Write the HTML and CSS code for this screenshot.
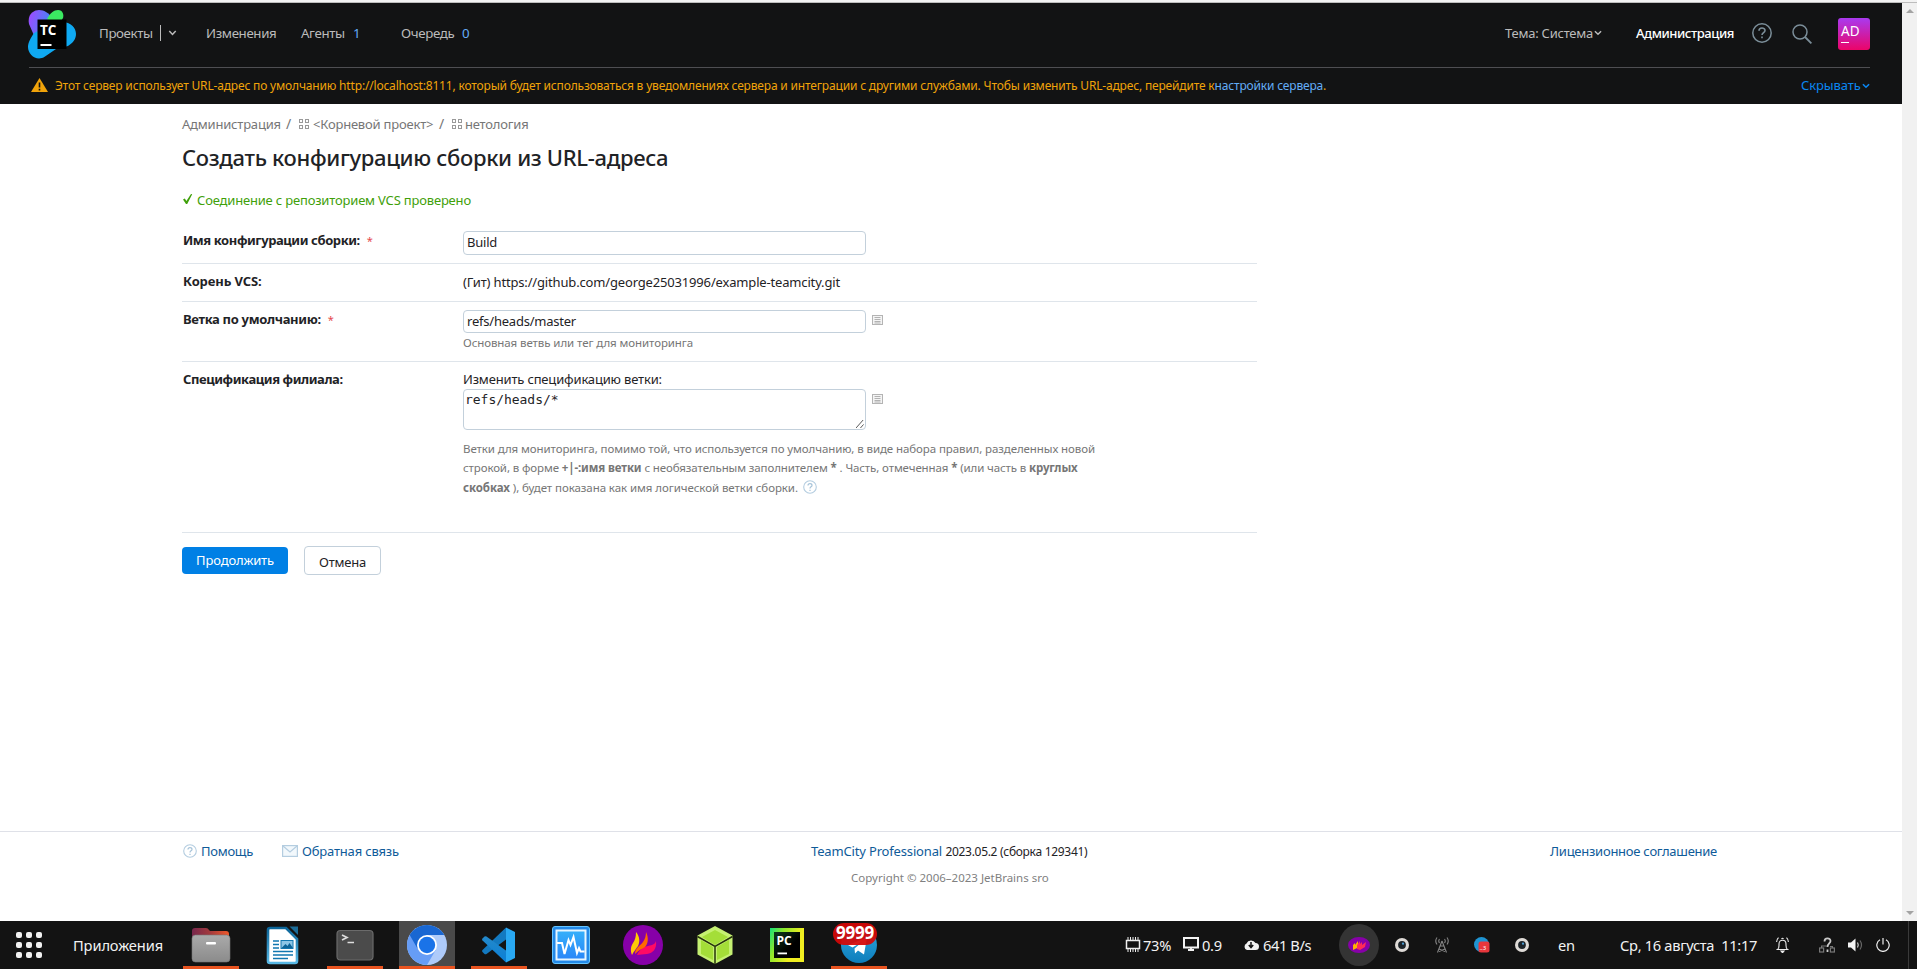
FILE: index.html
```
<!DOCTYPE html>
<html lang="ru">
<head>
<meta charset="utf-8">
<title>Создать конфигурацию сборки — TeamCity</title>
<link rel="stylesheet" href="styles.css">
</head>
<body>
<svg width="0" height="0" class="defs">
  <defs>
    <linearGradient id="tcA" x1="0" y1="0.3" x2="1" y2="0.6"><stop offset="0" stop-color="#9a4dff"/><stop offset="1" stop-color="#1aa0f0"/></linearGradient>
    <linearGradient id="fold" x1="0" x2="1"><stop offset="0" stop-color="#77274c"/><stop offset=".5" stop-color="#a43a3c"/><stop offset="1" stop-color="#f0592a"/></linearGradient>
    <linearGradient id="foldF" x1="0" y1="0" x2="0" y2="1"><stop offset="0" stop-color="#aaa"/><stop offset="1" stop-color="#8b8b8b"/></linearGradient>
    <linearGradient id="docG" x1="0" y1="0" x2="0" y2="1"><stop offset="0" stop-color="#0b6599"/><stop offset="1" stop-color="#59b9e6"/></linearGradient>
    <linearGradient id="vsc" x1="0" y1="0" x2="0" y2="1"><stop offset="0" stop-color="#2489ca"/><stop offset="1" stop-color="#0a7fd6"/></linearGradient>
    <linearGradient id="mon" x1="0" y1="0" x2="0" y2="1"><stop offset="0" stop-color="#35b0fa"/><stop offset="1" stop-color="#2a86f8"/></linearGradient>
    <linearGradient id="pcG" x1="0" y1="0" x2="1" y2=".5"><stop offset="0" stop-color="#14e07a"/><stop offset=".35" stop-color="#8fe82c"/><stop offset=".8" stop-color="#f0ee20"/></linearGradient>
    <linearGradient id="pcK" x1="0" y1="0" x2="1" y2="1"><stop offset="0" stop-color="#0c3a1c"/><stop offset=".6" stop-color="#000"/></linearGradient>
    <linearGradient id="tgG" x1="0" y1="0" x2="0" y2="1"><stop offset="0" stop-color="#2fa8df"/><stop offset="1" stop-color="#0d7dbb"/></linearGradient>
    <symbol id="grid" viewBox="0 0 11 11"><g fill="none" stroke="#999"><rect x=".5" y=".5" width="3" height="3"/><rect x="6.5" y=".5" width="3" height="3"/><rect x=".5" y="6.5" width="3" height="3"/><rect x="6.5" y="6.5" width="3" height="3"/></g></symbol>
    <symbol id="list" viewBox="0 0 11 10"><rect x=".5" y=".5" width="10" height="9" fill="#f4f4f4" stroke="#b4b4b4"/><path d="M2.5 2.5h6M2.5 4.5h6M2.5 6.5h6M2.5 8h6" stroke="#aaa" stroke-width=".9"/></symbol>
    <symbol id="help" viewBox="0 0 14 14"><circle cx="7" cy="7" r="6.3" fill="none" stroke="#b4cde0" stroke-width="1.1"/><path d="M5 5.6c0-2.6 4-2.4 4-.2 0 1.4-2 1.5-2 3M7 9.8v1.2" fill="none" stroke="#a6c3d9" stroke-width="1.2"/></symbol>
    <symbol id="flame" viewBox="0 0 40 40"><circle cx="20" cy="20" r="20" fill="#8700a8"/><path d="M14 30c2-4 5-8 11-9 5-1 7-2 8-5 1 8-3 12-9 13-4 .5-7 .5-10 1z" fill="#ff0a64"/><path d="M12 29c0-6 5-8 8-12 2-3 3-6 3-10 3 6 2 12-1 15-3 2-6 3-10 7z" fill="#ff6a00"/><path d="M9 30c-2-5-1-9 1-12 2-3 3-6 3-11 4 5 4 10 2 14-2 3-4 5-6 9z" fill="#ffcb05"/></symbol>
    <symbol id="eye" viewBox="0 0 14 14"><circle cx="7" cy="7" r="7" fill="#dedad6"/><circle cx="7" cy="7" r="3.9" fill="#1c2328"/><circle cx="8" cy="5.7" r="1.1" fill="#4d9fd6"/></symbol>
  </defs>
</svg>
<div class="window-edge"></div>
<div class="viewport">
  <div class="page">
    <header class="header">
      <div class="topbar">
        <svg class="logo" viewBox="0 0 48 49"><path d="M1 14C-1 4 6 0 11 0c6 0 9 3 14 8l6 20L8 30z" fill="url(#tcA)"/><path d="M19 9C22 3 26 0 30 0c5 0 6 5 5 8l-5 8z" fill="#3bea62"/><path d="M34 12c9 0 14 6 14 12 0 5-3 9-8 12l-12 3-11 7.500C9 52 0 45 0 37c0-5 3-9 6-14l10-5z" fill="#0fa9f2"/><rect x="9.500" y="9.500" width="29" height="29.500"/><rect x="12.500" y="34" width="11" height="2" fill="#fff"/><text x="12" y="24.500" class="logo-text">TC</text></svg>
        <nav class="nav">
          <span class="n-proj">Проекты</span><i class="bar"></i>
          <svg class="chev" viewBox="0 0 8 6"><path d="M.8 1L4 4.4 7.2 1" fill="none" stroke="#bbb" stroke-width="1.5"/></svg>
          <span class="n-chg">Изменения</span>
          <span class="n-ag">Агенты</span><b class="cnt c1">1</b>
          <span class="n-q">Очередь</span><b class="cnt">0</b>
        </nav>
        <div class="tools">
          <span class="theme">Тема: Система</span>
          <svg class="mini" viewBox="0 0 7 5"><path d="M.8 1l2.7 2.6L6.2 1" fill="none" stroke="#bbb" stroke-width="1.3"/></svg>
          <span class="admin">Администрация</span>
          <svg class="t-help" viewBox="0 0 20 20"><circle cx="10" cy="10" r="9.2" fill="none" stroke="#7b8e99" stroke-width="1.5"/><path d="M7 7.8c0-3.8 6-3.6 6-.4 0 2.2-3 2.2-3 4.6M10 13.4v1.8" fill="none" stroke="#7b8e99" stroke-width="1.6"/></svg>
          <svg class="t-search" viewBox="0 0 20 20"><circle cx="8" cy="8" r="7" fill="none" stroke="#7b8e99" stroke-width="1.5"/><path d="M13 13l6.4 6.4" stroke="#7b8e99" stroke-width="1.8"/></svg>
          <div class="avatar"><span>AD</span><i></i></div>
        </div>
      </div>
      <div class="notice">
        <svg class="warn" viewBox="0 0 17 14"><path d="M8.5 0L17 14H0z" fill="#f0a30a"/><path d="M8.5 4.5v5M8.5 10.7v1.8" stroke="#121314" stroke-width="1.6"/></svg>
        <p class="notice-text">Этот сервер использует URL-адрес по умолчанию http://localhost:8111, который будет использоваться в уведомлениях сервера и интеграции с другими службами. Чтобы изменить URL-адрес, перейдите к<a>настройки сервера</a>.</p>
        <span class="hide">Скрывать</span>
        <svg class="mini" viewBox="0 0 7 5"><path d="M.8 1l2.7 2.6L6.2 1" fill="none" stroke="#0a86f0" stroke-width="1.4"/></svg>
      </div>
    </header>

    <main class="main">
      <div class="crumbs"><span>Администрация</span><i>/</i><svg class="g"><use href="#grid"/></svg><span class="root">&lt;Корневой проект&gt;</span><i>/</i><svg class="g g2"><use href="#grid"/></svg><span>нетология</span></div>
      <h1>Создать конфигурацию сборки из URL-адреса</h1>
      <p class="ok"><svg viewBox="0 0 10 10"><path d="M0 5.6l1.8-1L3.4 7 8 0l1.200.2L4.2 10H3z" fill="#3fa00a"/></svg>Соединение с репозиторием VCS проверено</p>

      <section class="form">
        <div class="row r1"><label class="l1">Имя конфигурации сборки:<em>*</em></label><div><div class="input">Build</div></div></div>
        <div class="row r2"><label class="l2">Корень VCS:</label><div class="url">(Гит) https://github.com/george25031996/example-teamcity.git</div></div>
        <div class="row r3"><label class="l3">Ветка по умолчанию:<em>*</em></label><div><div class="line"><div class="input path">refs/heads/master</div><svg class="list"><use href="#list"/></svg></div><p class="hint">Основная ветвь или тег для мониторинга</p></div></div>
        <div class="row r4"><label class="l4">Спецификация филиала:</label><div><p class="edit">Изменить спецификацию ветки:</p>
          <div class="line"><div class="area">refs/heads/*<svg class="grip" viewBox="0 0 9 9"><path d="M0 9L8 0M5 9l3.5-4" stroke="#444" fill="none"/></svg></div><svg class="list"><use href="#list"/></svg></div>
          <p class="note"><span class="h1l">Ветки для мониторинга, помимо той, что используется по умолчанию, в виде набора правил, разделенных новой</span><br><span class="h2l">строкой, в форме <b>+|-:имя ветки</b> с необязательным заполнителем <b>*</b> . Часть, отмеченная <b>*</b> (или часть в <b>круглых</b></span><br><span class="h3l"><b>скобках</b> ), будет показана как имя логической ветки сборки.</span><svg class="q"><use href="#help"/></svg></p></div></div>
      </section>
      <div class="buttons"><button class="primary">Продолжить</button><button class="plain">Отмена</button></div>
    </main>

    <footer class="footer">
      <div class="f-left"><svg class="f-q"><use href="#help"/></svg><a class="f-help">Помощь</a><svg class="mail" viewBox="0 0 16 12"><rect x=".6" y=".6" width="14.8" height="10.8" fill="#f2f8fc" stroke="#b4cde0" stroke-width="1.2"/><path d="M1 1l7 6 7-6" fill="none" stroke="#b4cde0" stroke-width="1.2"/></svg><a class="f-back">Обратная связь</a></div>
      <div class="f-mid"><p><a>TeamCity Professional</a> <span>2023.05.2 (сборка 129341)</span></p><p class="copy">Copyright © 2006–2023 JetBrains sro</p></div>
      <a class="f-lic">Лицензионное соглашение</a>
    </footer>
  </div>
  <div class="scrollbar"><i class="up"></i><i class="down"></i></div>
</div>

<div class="taskbar">
  <svg class="apps" viewBox="0 0 26 26" fill="#f2f2f2"><rect width="6" height="6" rx="2"/><rect x="10" width="6" height="6" rx="2"/><rect x="20" width="6" height="6" rx="2"/><rect y="10" width="6" height="6" rx="2"/><rect x="10" y="10" width="6" height="6" rx="2"/><rect x="20" y="10" width="6" height="6" rx="2"/><rect y="20" width="6" height="6" rx="2"/><rect x="10" y="20" width="6" height="6" rx="2"/><rect x="20" y="20" width="6" height="6" rx="2"/></svg>
  <span class="apps-label">Приложения</span>
  <div class="dock">
    <div class="tile run"><svg viewBox="0 0 40 40"><path d="M1 9V6q0-3 3-3h11q2 0 3 2l1 1h16q3 0 3 3v5H1z" fill="url(#fold)"/><rect x="1" y="10" width="38" height="27" rx="3.5" fill="url(#foldF)" stroke="#777" stroke-width=".6"/><rect x="15" y="17" width="10" height="2.6" rx="1" fill="#fff"/></svg></div>
    <div class="tile"><svg viewBox="0 0 40 40"><path d="M7 3h16l11 11v22q0 2-2 2H7q-2 0-2-2V5q0-2 2-2z" fill="#fff" stroke="url(#docG)" stroke-width="2.600"/><path d="M26.500 1.500H35V10z" fill="#1b6c98"/><path d="M10 16h6M10 19.500h6M10 23h6M10 26.500h20M10 30h20M10 33.500h15" stroke="#1277b0" stroke-width="1.700"/><rect x="18" y="15.500" width="12" height="8" fill="#8cc5e6" stroke="#1277b0"/><path d="M18.500 23l4-4 2 2 2-3 3.500 5z" fill="#0c6499"/></svg></div>
    <div class="tile run"><svg viewBox="0 0 40 40"><rect x="2" y="5.500" width="36" height="29.500" rx="3.500" fill="#4b4b4b" stroke="#6b6b6b" stroke-width="1.200"/><path d="M7 10l5 2.500L7 15" fill="none" stroke="#ddd" stroke-width="1.700"/><path d="M12.500 17.500h6.500" stroke="#ddd" stroke-width="1.500"/></svg></div>
    <div class="tile run active"><svg viewBox="0 0 40 40"><circle cx="20" cy="20" r="20" fill="#aecbfa"/><path d="M2.700 10A20 20 0 0 0 20 40L28.700 25 20 20z" fill="#669df6"/><path d="M2.700 10A20 20 0 0 1 37.300 10H20L11.300 25z" fill="#1967d2"/><circle cx="20" cy="20" r="10" fill="#fff"/><circle cx="20" cy="20" r="8.200" fill="#1a73e8"/></svg></div>
    <div class="tile run"><svg viewBox="0 0 40 40"><path d="M27 2.500L3.500 25q-1 1 0 2l2 2q1 .700 2 0L29 13z" fill="#1379c0"/><path d="M27 37.500L3.500 15.500q-1-1 0-2l2-2q1-.700 2 0L29 27z" fill="url(#vsc)"/><path d="M27 2.500L36 7v26l-9 4.500z" fill="#29a8f2"/></svg></div>
    <div class="tile"><svg viewBox="0 0 40 40"><rect x="1.500" y="1.500" width="37" height="37" rx="2.500" fill="#2389e8"/><rect x="1.500" y="1.500" width="37" height="37" rx="2.500" fill="none" stroke="#65c5ff" stroke-width="1"/><rect x="5.500" y="5.500" width="29" height="29" fill="url(#mon)" stroke="#e8f6ff" stroke-width="2"/><path d="M6 18h5l2.500 11 4-14 2 5 3-8 3.500 16 2-5 1.500 3.500h4" fill="none" stroke="#fff" stroke-width="2"/></svg></div>
    <div class="tile"><svg><use href="#flame"/></svg></div>
    <div class="tile"><svg viewBox="0 0 40 40"><path d="M20 1l17.500 9.500v19L20 39 2.500 29.500v-19z" fill="#c5f072"/><path d="M20 5l13 7-13 8-13-8zM6 15l12 7v13L6 29zM34 15l-12 7v13l12-6z" fill="#a4de38"/><path d="M2.500 11.500L20 21.500l17.500-10M20 21.500V39" fill="none" stroke="#26330b" stroke-width="1.500"/></svg></div>
    <div class="tile"><svg viewBox="0 0 40 40"><rect x="3" y="3" width="34" height="34" fill="url(#pcG)"/><rect x="7" y="7" width="26" height="26" fill="url(#pcK)"/><text x="9.500" y="20" class="pc-text">PC</text><rect x="10.500" y="27.500" width="9.500" height="1.800" fill="#fff"/></svg></div>
    <div class="tile run"><svg viewBox="0 0 40 40"><circle cx="20" cy="20" r="18" fill="url(#tgG)"/><path d="M9 20l19-7.500-3 17-6-4-3 3-.500-5 8-7-10 6z" fill="#fff"/></svg><b class="badge">9999</b></div>
  </div>
  <div class="tray">
    <svg class="chip" viewBox="0 0 15 15"><rect x="1" y="3.500" width="13" height="8" fill="none" stroke="#eee" stroke-width="1.500"/><path d="M2.500 0v3M5 0v3M7.500 0v3M10 0v3M12.500 0v3M2.500 12v3M5 12v3M7.500 12v3M10 12v3M12.500 12v3" stroke="#eee"/></svg><span class="s-mem">73%</span>
    <svg class="scr" viewBox="0 0 16 14"><rect x="1" y="1" width="14" height="9.500" fill="none" stroke="#f2f2f2" stroke-width="2"/><path d="M5 13h6M8 10v3" stroke="#f2f2f2" stroke-width="1.800"/></svg><span class="s-load">0.9</span>
    <svg class="cloud" viewBox="0 0 16 11"><path d="M4 11a3.500 3.500 0 0 1-.500-6.500A5 5 0 0 1 12.500 4 3.500 3.500 0 0 1 12.500 11z" fill="#f2f2f2"/><path d="M8 3v4.500M5.800 6L8 8.500 10.200 6" fill="none" stroke="#131313" stroke-width="1.500"/></svg><span class="s-net">641 B/s</span>
    <div class="bubble"><svg viewBox="0 0 22 16"><ellipse cx="11" cy="8" rx="11" ry="8" fill="#8700a8"/><path d="M5 13V8l2-2v2l3-4v4l1-1v3z" fill="#ffb300"/><path d="M9 12V8l3-4v3l2-2v3l4-3-1 5-5 3z" fill="#ff2a58"/></svg></div>
    <svg class="eye e1"><use href="#eye"/></svg>
    <svg class="ant" viewBox="0 0 14 16" fill="none" stroke="#858585" stroke-width="1.100"><path d="M7 4L2.500 15.500M7 4l4.500 11.500M5 9h4M4 12l6 2.500M10 12l-6 2.500M4.500 2q-1.500 2 0 4M9.500 2q1.500 2 0 4M2 .500q-2.500 3.500 0 7M12 .500q2.500 3.500 0 7"/></svg>
    <svg class="tg" viewBox="0 0 16 16"><circle cx="7.500" cy="7.500" r="7.500" fill="#1f94d2"/><rect x="4.500" y="4.500" width="11" height="11" rx="2.500" fill="#e8373c"/><text x="5.500" y="13" class="tg-text">..3</text></svg>
    <svg class="eye e2"><use href="#eye"/></svg>
    <span class="s-lang">en</span>
    <span class="s-date">Ср, 16 августа&nbsp; 11:17</span>
    <svg class="bell" viewBox="0 0 13 16" fill="none" stroke="#eee" stroke-width="1.100"><path d="M1.500 12.500c1.800-1 1.500-3 1.500-5.500 0-5 7-5 7 0 0 2.500-.300 4.500 1.500 5.500zM5.500 2q1-1.500 2 0M.600 5Q.600 2.500 2.500.700M12.400 5Q12.400 2.500 10.500.700"/><path d="M5 14h3l-1.500 1.800z" fill="#eee"/></svg>
    <svg class="netw" viewBox="0 0 16 16" fill="none" stroke="#777" stroke-width="1.200"><rect x=".600" y="11" width="4" height="4"/><rect x="11.400" y="11" width="4" height="4"/><path d="M2.600 11V9h5M13.400 11V9.500H11"/><path d="M5.500 4.500c0-4 6-4 6-.500 0 2.500-3 2.500-3 6M8.500 12.500v2.500" stroke="#c9c9c9" stroke-width="1.800"/></svg>
    <svg class="vol" viewBox="0 0 15 14"><path d="M0 4.500h3L7.500.500v13L3 9.500H0z" fill="#f2f2f2"/><path d="M9.500 4.500q1.500 2.500 0 5" fill="none" stroke="#ccc" stroke-width="1.200"/><path d="M12 2.500q3 4.500 0 9" fill="none" stroke="#666" stroke-width="1.200"/></svg>
    <svg class="power" viewBox="0 0 14 14" fill="none" stroke="#eee" stroke-width="1.200"><path d="M4 1.800a6.200 6.200 0 1 0 6 0M7 0v6.500"/></svg>
    <i class="desk-edge"></i>
  </div>
</div>
</body>
</html>
```
FILE: styles.css
```
* { box-sizing: border-box; }
html, body { margin: 0; height: 969px; overflow: hidden; }
body { display: flex; flex-direction: column; font: 13px/20px "Noto Sans", sans-serif; color: #1f2326; background: #fff; white-space: nowrap; }
p, h1 { margin: 0; }
svg { display: block; flex: none; }
.defs { position: absolute; }
em, i { font-style: normal; }
.window-edge { height: 3px; flex: none; background: #f3f3f3; border-bottom: 1px solid #bdbdbd; }
.viewport { display: flex; height: 918px; flex: none; }
.page { width: 1902px; display: flex; flex-direction: column; }

/* header */
.header { height: 101px; flex: none; background: #121314; padding: 0 32px 0 28px; }
.topbar { height: 65px; border-bottom: 1px solid #4e4e52; display: flex; align-items: center; margin-left: 1px; padding-bottom: 5px; }
.logo { width: 48px; height: 49px; margin: 4px 0 0 -1px; }
.logo-text { font: 700 13.500px "Open Sans", sans-serif; fill: #fff; }
.nav { display: flex; align-items: center; margin-left: 23px; color: #bbb; font-size: 13.300px; letter-spacing: -.37px; }
.nav span { flex: none; }
.n-proj { width: 54px; }
.bar { width: 1px; height: 16px; background: #bbb; margin-left: 7px; }
.chev { width: 9px; height: 6px; margin: 1px 0 0 7px; }
.n-chg { width: 70px; margin-left: 29px; }
.n-ag { width: 44px; margin-left: 25px; }
.n-q { width: 53px; margin-left: 0; }
.cnt { font-weight: 400; color: #64adf7; margin-left: 8px; }
.c1 { width: 48px; }
.tools { display: flex; align-items: center; margin-left: auto; color: #bbb; }
.theme { width: 88px; letter-spacing: -.23px; }
.mini { width: 8px; height: 6px; margin: 1px 0 0 1px; }
.admin { width: 98px; margin-left: 34px; color: #fff; font-weight: 500; letter-spacing: -.43px; }
.t-help { width: 20px; height: 20px; margin: 1px 0 0 18px; }
.t-search { width: 20px; height: 20px; margin: 3px 0 0 20px; }
.avatar { width: 32px; height: 32px; margin: 2px 0 0 26px; border-radius: 3px; background: linear-gradient(#a93af0, #ec0468); color: #fff; padding: 3px 0 0 3px; font-size: 13.500px; }
.avatar span { display: block; }
.avatar i { display: block; width: 8px; height: 1px; background: #fff; margin-top: 1px; }
.notice { display: flex; align-items: center; height: 35px; margin-left: 3px; font-size: 12px; }
.warn { width: 17px; height: 14px; margin-top: -1px; }
.notice-text { margin-left: 7px; color: #f0a30a; letter-spacing: -.172px; }
.notice-text a { color: #64adf7; }
.hide { margin-left: auto; width: 60px; color: #0a86f0; font-size: 13px; letter-spacing: -.12px; margin-top: -1px; }

/* content */
.main { margin-left: 182px; width: 1075px; height: 727px; flex: none; }
.crumbs { height: 40px; display: flex; align-items: center; color: #767676; letter-spacing: -.2px; }
.crumbs span:first-child { width: 98px; }
.crumbs i { width: 6px; margin-left: 6px; font-size: 14px; }
.crumbs .g { width: 11px; height: 11px; margin: 0 3px 0 7px; }
.crumbs .g2 { margin: 0 2px 0 7px; }
.root { width: 120px; }
h1 { font: 500 22px/26px "Noto Sans", sans-serif; height: 28px; letter-spacing: -.32px; }
.ok { height: 51px; padding-top: 18px; display: flex; align-items: flex-start; color: #3fa00a; letter-spacing: -.18px; }
.ok svg { width: 10px; height: 10px; margin: 4px 4px 0 1px; }
.row { display: grid; grid-template-columns: 281px 1fr; border-bottom: 1px solid #dfe5eb; }
.row label { font-weight: 700; padding: 7px 0 0 1px; }
.row label em { color: #e5484d; font-weight: 400; font-size: 11px; margin-left: 7px; }
.l1, .l4 { letter-spacing: -.41px; }
.l2 { letter-spacing: -.1px; }
.l3 { letter-spacing: -.32px; }
.r1 { height: 41px; padding-top: 0; }
.r1 .input { margin-top: 8px; }
.r2 { height: 38px; }
.url { padding-top: 8px; letter-spacing: -.163px; }
.r3 { height: 60px; }
.r3 .line { margin-top: 8px; }
.r3 .list { margin-top: 5px; }
.r4 { height: 171px; }
.input { width: 403px; height: 24px; border: 1px solid #c3d0db; border-radius: 4px; padding: 0 3px; letter-spacing: -.22px; }
.line { display: flex; align-items: flex-start; }
.list { width: 11px; height: 10px; margin: 5px 0 0 6px; }
.hint { font-size: 11.500px; line-height: 18px; color: #767676; letter-spacing: -.09px; }
.r3 .input { height: 23px; }
.r3 .hint { padding-top: 1px; }
.edit { padding-top: 7px; letter-spacing: -.165px; }
.area { position: relative; width: 403px; height: 41px; border: 1px solid #c3d0db; border-radius: 4px; padding: 2px 1px; font: 13px/16px "DejaVu Sans Mono", monospace; letter-spacing: -.03px; }
.grip { position: absolute; right: 1px; bottom: 1px; width: 8px; height: 8px; }
.note { margin-top: 9px; font-size: 11.500px; line-height: 19.400px; color: #767676; }
.h1l { letter-spacing: -.088px; }
.h2l { letter-spacing: -.115px; }
.h3l { letter-spacing: -.07px; }
.q { display: inline-block; width: 14px; height: 14px; margin-left: 5px; vertical-align: -2px; }
.buttons { display: flex; align-items: center; gap: 16px; height: 29px; margin-top: 13px; }
button { font: 13px/20px "Noto Sans", sans-serif; padding: 0; border-radius: 4px; letter-spacing: -.15px; }
.primary { width: 106px; height: 27px; border: 0; background: #0080e5; color: #fff; margin-top: -1px; }
.plain { width: 77px; height: 29px; border: 1px solid #c3d0db; background: #fff; color: #1f2326; padding-top: 3px; letter-spacing: -.2px; }

/* footer */
.footer { height: 90px; border-top: 1px solid #dfe1e8; padding: 9px 0 0 183px; display: grid; grid-template-columns: 628px 739px 1fr; align-items: start; }
.footer a { color: #0f5b99; }
.f-left { display: flex; align-items: center; }
.f-q { width: 14px; height: 14px; margin-right: 4px; }
.f-help { width: 52px; letter-spacing: -.28px; }
.mail { width: 16px; height: 12px; margin: 0 4px 0 29px; }
.f-back { letter-spacing: -.18px; }
.f-mid a { letter-spacing: -.16px; }
.f-mid span { font-size: 12px; letter-spacing: -.3px; }
.copy { margin: 6px 0 0 40px; font-size: 11.500px; color: #808080; }
.f-lic { letter-spacing: -.25px; }
.scrollbar { width: 15px; background: #f1f1f1; display: flex; flex-direction: column; justify-content: space-between; align-items: center; padding: 6px 0; }
.up, .down { border: 4px solid transparent; border-top: 0; border-bottom-color: #a3a3a3; }
.down { transform: rotate(180deg); }

/* desktop panel */
.taskbar { height: 48px; flex: none; background: #131313; display: flex; align-items: center; color: #f2f2f2; font-size: 14.670px; }
.taskbar span { margin-top: -1px; }
.apps { width: 26px; height: 26px; margin-left: 16px; }
.apps-label { width: 90px; margin-left: 31px; letter-spacing: -.125px; }
.dock { display: flex; gap: 16px; margin-left: 20px; }
.tile { position: relative; width: 56px; height: 48px; padding: 4px 8px; }
.tile svg { width: 40px; height: 40px; }
.run { border-bottom: 3px solid #e95420; }
.active { background: #4a4a4a; }
.pc-text { font: 700 12px "Open Sans", sans-serif; fill: #fff; }
.badge { position: absolute; left: 2px; top: 2px; width: 44px; height: 22px; border-radius: 11px; background: #d40808ee; color: #fff; font: 700 17px/20px "Noto Sans", sans-serif; text-align: center; letter-spacing: -.2px; }
.tray { display: flex; align-items: center; flex: 1; height: 48px; margin-left: 238px; }
.chip { width: 16px; height: 15px; margin-top: -2px; }
.s-mem { width: 28px; margin-left: 2px; letter-spacing: -.32px; }
.scr { width: 16px; height: 14px; margin: -2px 0 0 12px; }
.s-load { width: 20px; margin-left: 3px; letter-spacing: -.3px; }
.cloud { width: 16px; height: 11px; margin: -2px 0 0 21px; }
.s-net { width: 48px; margin-left: 4px; letter-spacing: -.42px; }
.bubble { width: 40px; height: 42px; margin-left: 28px; border-radius: 50%; background: #343434; display: grid; place-items: center; }
.bubble svg { width: 22px; height: 16px; }
.eye { width: 14px; height: 14px; }
.e1 { margin-left: 16px; }
.ant { width: 14px; height: 16px; margin-left: 26px; }
.tg { width: 16px; height: 16px; margin-left: 25px; }
.tg-text { font: 6px "Noto Sans", sans-serif; fill: #fff; }
.e2 { margin-left: 25px; }
.s-lang { width: 16px; margin-left: 29px; letter-spacing: -.3px; }
.s-date { width: 137px; margin-left: 46px; letter-spacing: -.32px; }
.bell { width: 13px; height: 16px; margin-left: 19px; }
.netw { width: 16px; height: 16px; margin-left: 30px; }
.vol { width: 15px; height: 14px; margin: -1px 0 0 13px; }
.power { width: 14px; height: 14px; margin: -1px 0 0 13px; }
.desk-edge { width: 1px; height: 48px; background: #3a3a3a; margin-left: 18px; }
```
